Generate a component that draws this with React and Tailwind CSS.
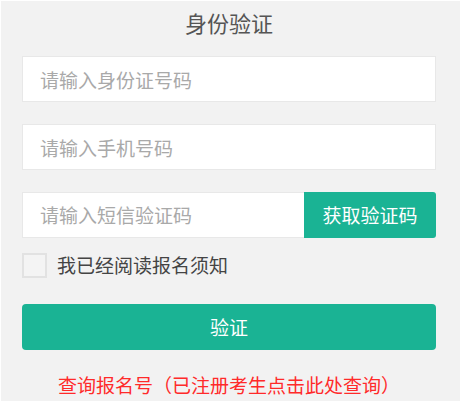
import { useState } from "react"

const font = { fontFamily: '"Microsoft YaHei", "Noto Sans CJK SC", "Noto Sans", sans-serif' }

export default function App() {
  const [agree, setAgree] = useState(false)

  return (
    <div className="bg-white w-[463px] h-[404px] pl-px pt-px" style={font}>
      <div className="bg-[#f2f2f2] w-[459px] h-[400px] pl-[21px] pr-[24px] flex flex-col">
        <h1 className="h-[42px] flex items-center justify-center text-[22px] text-[#555] font-normal">身份验证</h1>

        <input
          className="mt-[13px] h-[46px] w-full bg-white border border-[#e8e8e8] pl-[17px] text-[19px] text-[#333] placeholder:text-[#a9a9a9] outline-none"
          placeholder="请输入身份证号码"
        />
        <input
          className="mt-[22px] h-[46px] w-full bg-white border border-[#e8e8e8] pl-[17px] text-[19px] text-[#333] placeholder:text-[#a9a9a9] outline-none"
          placeholder="请输入手机号码"
        />

        <div className="mt-[22px] h-[46px] flex">
          <input
            className="flex-1 min-w-0 bg-white border border-[#e8e8e8] border-r-0 pl-[17px] text-[19px] text-[#333] placeholder:text-[#a9a9a9] outline-none"
            placeholder="请输入短信验证码"
          />
          <button className="w-[132px] bg-[#1ab394] text-white text-[19px] rounded-r-[3px]">获取验证码</button>
        </div>

        <label className="mt-[15px] h-[25px] flex items-center gap-[10px] cursor-pointer">
          <span
            className="w-[25px] h-[25px] border-2 border-[#e2e2e2] bg-[#f4f4f4] flex items-center justify-center text-[#1ab394] text-[16px]"
            onClick={() => setAgree(!agree)}
          >
            {agree ? "✓" : ""}
          </span>
          <span className="text-[19px] text-[#444]">我已经阅读报名须知</span>
        </label>

        <button className="mt-[26px] h-[46px] w-full bg-[#1ab394] text-white text-[19px] rounded-[4px]">验证</button>

        <a className="mt-[23px] leading-[24px] text-center text-[19px] text-[#ff2a2a] cursor-pointer">查询报名号（已注册考生点击此处查询）</a>
      </div>
    </div>
  )
}
